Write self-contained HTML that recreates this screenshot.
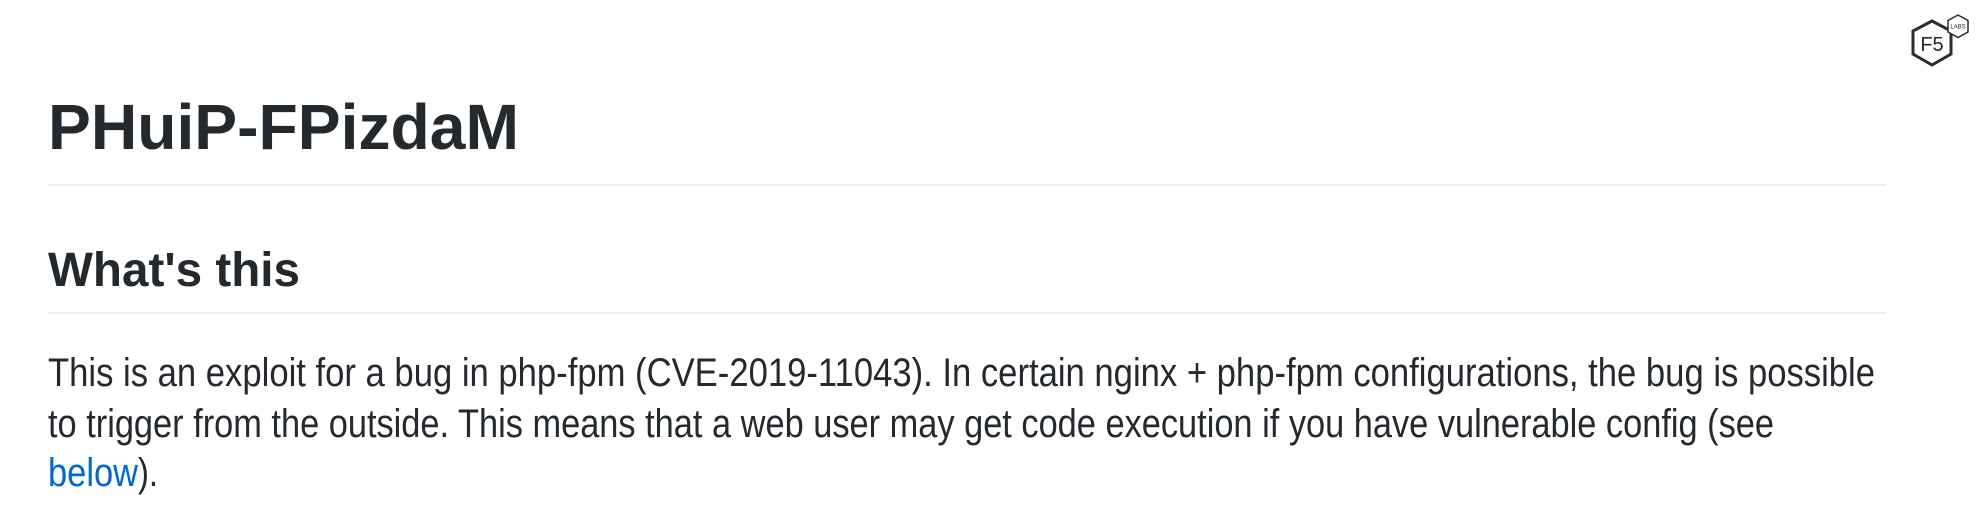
<!DOCTYPE html>
<html><head><meta charset="utf-8"><style>
html,body{margin:0;padding:0;background:#fff;}
body{width:1985px;height:532px;position:relative;overflow:hidden;}
svg text{font-family:"Liberation Sans",Arial,sans-serif;fill:#24292e;}
</style></head><body>
<svg style="position:absolute;left:0;top:0" width="1985" height="532" viewBox="0 0 1985 532">
<text x="48" y="149" font-size="64" font-weight="bold" textLength="471" lengthAdjust="spacingAndGlyphs">PHuiP-FPizdaM</text>
<rect x="48" y="184" width="1838" height="2" fill="#eaecef"/>
<text x="48" y="286" font-size="48" font-weight="bold" textLength="252" lengthAdjust="spacingAndGlyphs">What's this</text>
<rect x="48" y="312" width="1838" height="2" fill="#eaecef"/>
<text x="48" y="386" font-size="40" textLength="1827" lengthAdjust="spacingAndGlyphs">This is an exploit for a bug in php-fpm (CVE-2019-11043). In certain nginx + php-fpm configurations, the bug is possible</text>
<text x="48" y="437" font-size="40" textLength="1726" lengthAdjust="spacingAndGlyphs">to trigger from the outside. This means that a web user may get code execution if you have vulnerable config (see</text>
<text x="48" y="486" font-size="40" textLength="90" lengthAdjust="spacingAndGlyphs" style="fill:#0366d6">below</text>
<text x="138" y="486" font-size="40" textLength="20" lengthAdjust="spacingAndGlyphs">).</text>
</svg>
<svg style="position:absolute;left:1905px;top:10px" width="80" height="64" viewBox="0 0 80 64">
<polygon points="27,11 46,21 46,44 27,55 8,44 8,21" fill="none" stroke="#2d2d2d" stroke-width="3"/>
<polygon points="53,5 63,10.5 63,22 53,27.5 43,22 43,10.5" fill="#fff" stroke="#2d2d2d" stroke-width="1.5"/>
<text x="27" y="41" text-anchor="middle" font-family="Liberation Sans,sans-serif" font-size="20" fill="#2d2d2d">F5</text>
<text x="53" y="18.5" text-anchor="middle" font-family="Liberation Sans,sans-serif" font-size="6" fill="#2d2d2d">LABS</text>
</svg>
</body></html>
